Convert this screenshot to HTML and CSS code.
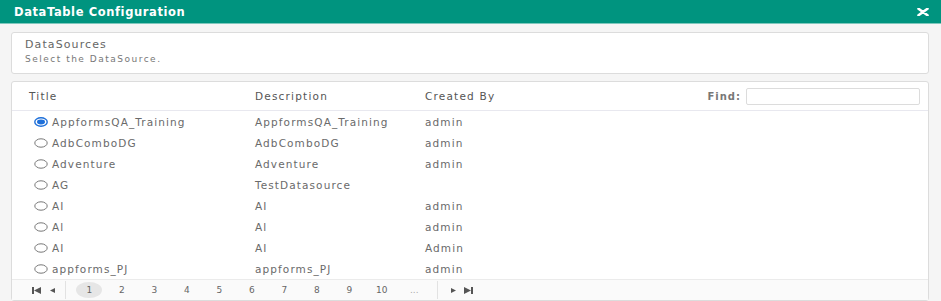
FILE: index.html
```html
<!DOCTYPE html>
<html lang="en">

<head>
    <meta charset="UTF-8">
    <meta name="viewport" content="width=device-width, initial-scale=1.0">
    <title>DataTable Configuration</title>
    <link rel="stylesheet" href="styles.css">
</head>

<body>

    <header class="dialog-header">
        <h1>DataTable Configuration</h1>
        <a class="close" href="#" title="Close">
            <svg width="12" height="8" viewBox="0 0 12 8"><path d="M1.5 0.8 L10.5 7.2 M10.5 0.8 L1.5 7.2" stroke="#fff" stroke-width="2.6" stroke-linecap="round"/></svg>
        </a>
    </header>

    <div class="dialog-body">
        <!-- source info -->
        <div class="panel info">
            <h2>DataSources</h2>
            <p>Select the DataSource.</p>
        </div>

        <div class="panel grid-panel">
            <div class="grid-head">
                <span>Title</span>
                <span>Description</span>
                <span>Created By</span>
                <label class="find">Find: <input type="text"></label>
            </div>

            <div class="grid-rows">
                <div class="row">
                    <span class="title"><svg class="radio" width="14" height="10" viewBox="0 0 14 10"><ellipse cx="7" cy="5" rx="6.2" ry="4.2" fill="#fff" stroke="#1e6fd9" stroke-width="1.4"/><ellipse cx="7" cy="5" rx="4" ry="2.4" fill="#1e6fd9"/></svg>AppformsQA_Training</span>
                    <span>AppformsQA_Training</span>
                    <span>admin</span>
                </div>
                <div class="row">
                    <span class="title"><svg class="radio" width="14" height="10" viewBox="0 0 14 10"><ellipse cx="7" cy="5" rx="6.2" ry="4.2" fill="#fff" stroke="#777" stroke-width="1"/></svg>AdbComboDG</span>
                    <span>AdbComboDG</span>
                    <span>admin</span>
                </div>
                <div class="row">
                    <span class="title"><svg class="radio" width="14" height="10" viewBox="0 0 14 10"><ellipse cx="7" cy="5" rx="6.2" ry="4.2" fill="#fff" stroke="#777" stroke-width="1"/></svg>Adventure</span>
                    <span>Adventure</span>
                    <span>admin</span>
                </div>
                <div class="row">
                    <span class="title"><svg class="radio" width="14" height="10" viewBox="0 0 14 10"><ellipse cx="7" cy="5" rx="6.2" ry="4.2" fill="#fff" stroke="#777" stroke-width="1"/></svg>AG</span>
                    <span>TestDatasource</span>
                    <span></span>
                </div>
                <div class="row">
                    <span class="title"><svg class="radio" width="14" height="10" viewBox="0 0 14 10"><ellipse cx="7" cy="5" rx="6.2" ry="4.2" fill="#fff" stroke="#777" stroke-width="1"/></svg>AI</span>
                    <span>AI</span>
                    <span>admin</span>
                </div>
                <div class="row">
                    <span class="title"><svg class="radio" width="14" height="10" viewBox="0 0 14 10"><ellipse cx="7" cy="5" rx="6.2" ry="4.2" fill="#fff" stroke="#777" stroke-width="1"/></svg>Al</span>
                    <span>Al</span>
                    <span>admin</span>
                </div>
                <div class="row">
                    <span class="title"><svg class="radio" width="14" height="10" viewBox="0 0 14 10"><ellipse cx="7" cy="5" rx="6.2" ry="4.2" fill="#fff" stroke="#777" stroke-width="1"/></svg>AI</span>
                    <span>AI</span>
                    <span>Admin</span>
                </div>
                <div class="row">
                    <span class="title"><svg class="radio" width="14" height="10" viewBox="0 0 14 10"><ellipse cx="7" cy="5" rx="6.2" ry="4.2" fill="#fff" stroke="#777" stroke-width="1"/></svg>appforms_PJ</span>
                    <span>appforms_PJ</span>
                    <span>admin</span>
                </div>
            </div>

            <div class="pager">
                <div class="pager-nav">
                    <svg width="9" height="7" viewBox="0 0 9 7"><rect x="0" y="0" width="2" height="7" fill="#555"/><path d="M9 0 L2 3.5 L9 7 Z" fill="#555"/></svg>
                    <svg width="5" height="5" viewBox="0 0 5 5"><path d="M5 0 L0 2.5 L5 5 Z" fill="#555"/></svg>
                </div>
                <div class="pager-numbers">
                    <a class="current" href="#">1</a>
                    <a href="#">2</a>
                    <a href="#">3</a>
                    <a href="#">4</a>
                    <a href="#">5</a>
                    <a href="#">6</a>
                    <a href="#">7</a>
                    <a href="#">8</a>
                    <a href="#">9</a>
                    <a href="#">10</a>
                    <a class="more" href="#">...</a>
                </div>
                <div class="pager-nav next">
                    <svg width="5" height="5" viewBox="0 0 5 5"><path d="M0 0 L5 2.5 L0 5 Z" fill="#555"/></svg>
                    <svg width="9" height="7" viewBox="0 0 9 7"><path d="M0 0 L7 3.5 L0 7 Z" fill="#555"/><rect x="7" y="0" width="2" height="7" fill="#555"/></svg>
                </div>
            </div>
        </div>
    </div>

</body>

</html>
```

FILE: styles.css
```css
body {
    margin: 0;
    padding: 0;
    font-family: "DejaVu Sans", sans-serif;
    font-size: 10.5px;
    letter-spacing: 1.1px;
    color: #6a6a6a;
    background-color: #f5f5f5;
    height: 301px;
    overflow: hidden;
}

.dialog-header {
    background-color: #00947f;
    color: white;
    height: 23px;
    display: flex;
    align-items: center;
    justify-content: space-between;
    padding: 0 12px 0 14px;
    border-bottom: 1px solid #7fc8bd;
}

.dialog-header h1 {
    margin: 0;
    font-size: 11.5px;
    font-weight: bold;
    letter-spacing: 0.6px;
}

.close {
    display: block;
    line-height: 0;
}

.dialog-body {
    padding: 8px 12px 0 11px;
}

.panel {
    background-color: white;
    border: 1px solid #dcdcdc;
    border-radius: 3px;
}

.info {
    height: 40px;
    padding: 0 13px;
}

.info h2 {
    margin: 5px 0 0;
    font-size: 11px;
    font-weight: normal;
    color: #666;
    letter-spacing: 1.1px;
}

.info p {
    margin: 3px 0 0;
    font-size: 9px;
    color: #777;
    letter-spacing: 1.5px;
}

.grid-panel {
    margin-top: 7px;
    display: flex;
    flex-direction: column;
}

.grid-head {
    display: grid;
    grid-template-columns: 226px 170px 1fr auto;
    align-items: center;
    height: 28px;
    padding: 0 8px 0 17px;
    border-bottom: 1px solid #e8e8ef;
    color: #555;
    font-size: 10.5px;
    letter-spacing: 1.2px;
}

.find {
    font-weight: bold;
    color: #777;
    font-size: 10px;
    letter-spacing: 1px;
    display: flex;
    align-items: center;
    gap: 5px;
}

.find input {
    width: 172px;
    height: 15px;
    border: 1px solid #dcdcdc;
    border-radius: 2px;
    padding: 0;
    margin: 0;
}

.row {
    display: grid;
    grid-template-columns: 226px 170px 1fr;
    align-items: center;
    height: 21px;
    padding-left: 17px;
}

.row .title {
    display: flex;
    align-items: center;
    padding-left: 5px;
}

.radio {
    margin-right: 4px;
}

.pager {
    display: flex;
    align-items: center;
    height: 20px;
    background-color: #fafafa;
    border-top: 1px solid #ebebeb;
    color: #666;
    font-size: 9px;
}

.pager-nav {
    display: flex;
    align-items: center;
    gap: 9px;
    padding: 0 10px 0 20px;
    height: 18px;
    border-right: 1px solid #e2e2e2;
}

.pager-nav.next {
    border-right: none;
    border-left: 1px solid #e2e2e2;
    padding: 0 0 0 13px;
    gap: 8px;
}

.pager-numbers {
    display: flex;
    align-items: center;
    padding: 0 6px 0 7px;
}

.pager-numbers a {
    color: #666;
    text-decoration: none;
    width: 32.5px;
    height: 16px;
    line-height: 16px;
    text-align: center;
    letter-spacing: 0;
}

.pager-numbers a.current {
    width: 26px;
    margin: 0 3.25px;
    background-color: #e6e6e6;
    border-radius: 50%;
}

.pager-numbers a.more {
    color: #aaa;
}
```
